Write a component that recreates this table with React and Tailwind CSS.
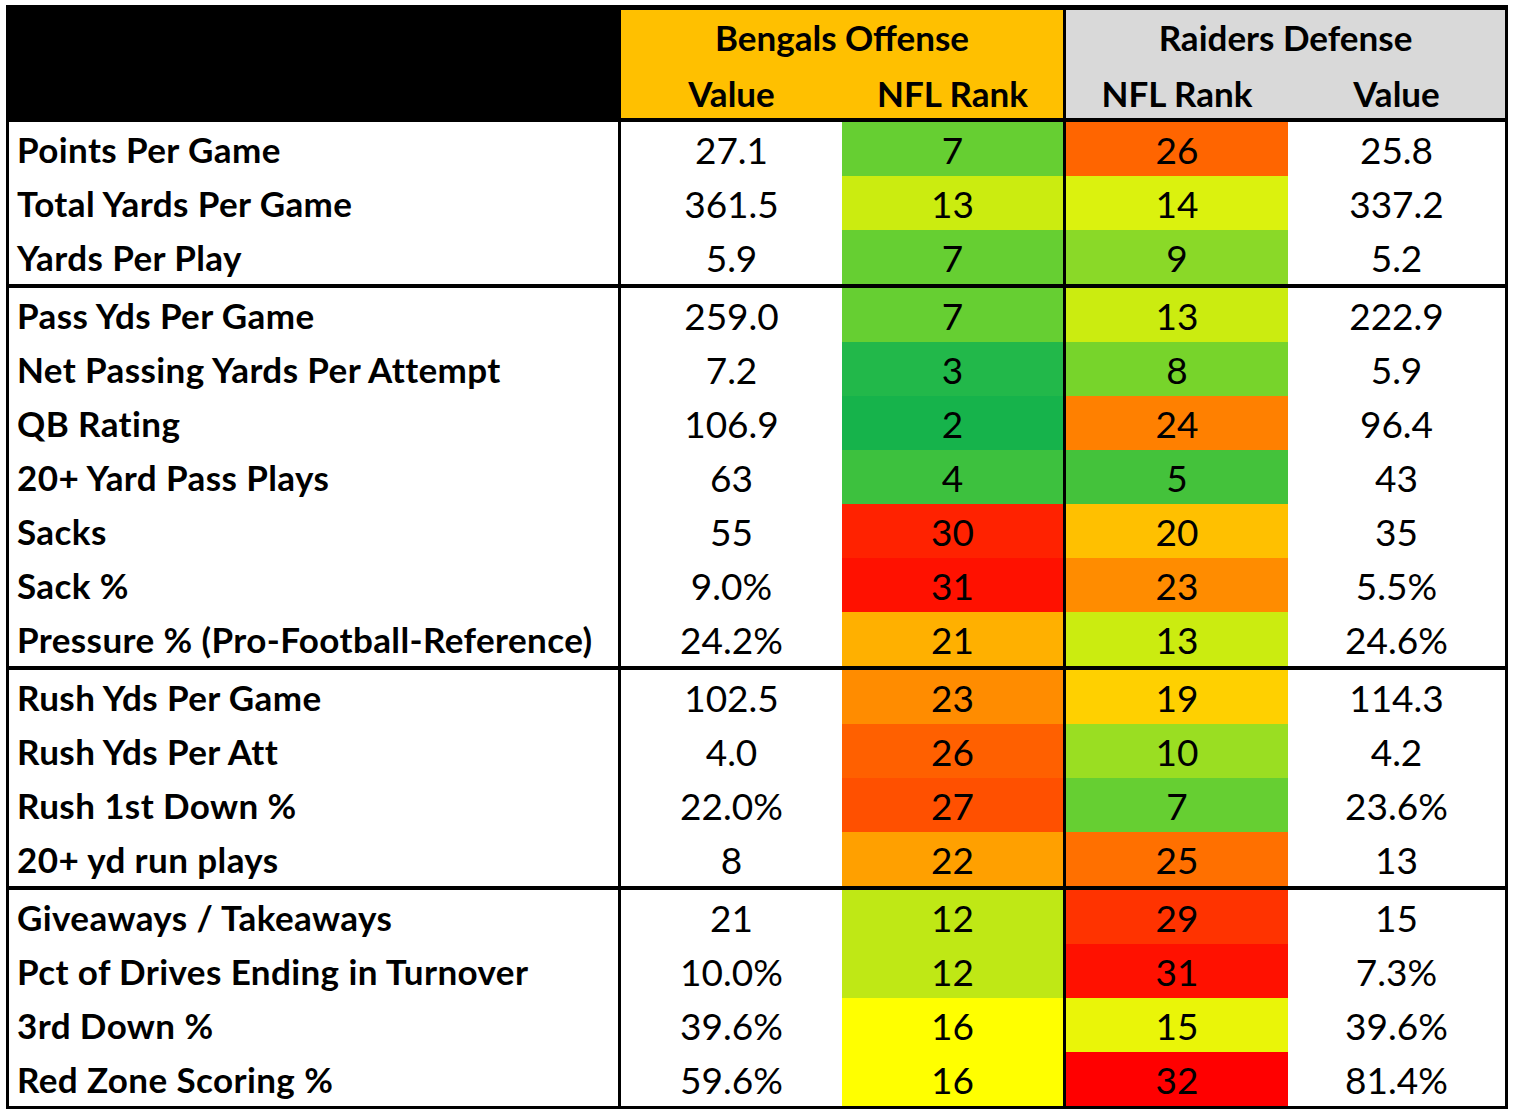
import React from "react";

const sections = [
    [
        ["Points Per Game", "27.1", 7, "#66cf32", 26, "#ff6500", "25.8"],
        ["Total Yards Per Game", "361.5", 13, "#cbec10", 14, "#dbf20e", "337.2"],
        ["Yards Per Play", "5.9", 7, "#66cf32", 9, "#8ad928", "5.2"],
    ],
    [
        ["Pass Yds Per Game", "259.0", 7, "#66cf32", 13, "#cbec10", "222.9"],
        ["Net Passing Yards Per Attempt", "7.2", 3, "#22b84a", 8, "#77d42b", "5.9"],
        ["QB Rating", "106.9", 2, "#16b34b", 24, "#ff8000", "96.4"],
        ["20+ Yard Pass Plays", "63", 4, "#3dc13e", 5, "#44c23b", "43"],
        ["Sacks", "55", 30, "#ff2200", 20, "#ffc000", "35"],
        ["Sack %", "9.0%", 31, "#ff1100", 23, "#ff8c00", "5.5%"],
        ["Pressure % (Pro-Football-Reference)", "24.2%", 21, "#ffb000", 13, "#cbec10", "24.6%"],
    ],
    [
        ["Rush Yds Per Game", "102.5", 23, "#ff8c00", 19, "#ffd000", "114.3"],
        ["Rush Yds Per Att", "4.0", 26, "#ff6000", 10, "#9ade22", "4.2"],
        ["Rush 1st Down %", "22.0%", 27, "#ff5000", 7, "#66cf32", "23.6%"],
        ["20+ yd run plays", "8", 22, "#ffa000", 25, "#ff7000", "13"],
    ],
    [
        ["Giveaways / Takeaways", "21", 12, "#bfe815", 29, "#ff3300", "15"],
        ["Pct of Drives Ending in Turnover", "10.0%", 12, "#bfe815", 31, "#ff1100", "7.3%"],
        ["3rd Down %", "39.6%", 16, "#ffff00", 15, "#eaf508", "39.6%"],
        ["Red Zone Scoring %", "59.6%", 16, "#ffff00", 32, "#ff0000", "81.4%"],
    ],
];

function StatRow({ row }) {
    const [label, oVal, oRank, oColor, dRank, dColor, dVal] = row;
    return (
        <div className="flex h-[54px] items-center text-[37px] leading-none">
            <div className="w-[612px] h-full flex items-center pl-[8px] text-[35px] font-bold tracking-[0.4px] border-r-[3px] border-black">
                {label}
            </div>
            <div className="w-[221px] h-full flex items-center justify-center">{oVal}</div>
            <div className="w-[224px] h-full border-r-[3px] border-black">
                <div className="h-full flex items-center justify-center" style={{ backgroundColor: oColor }}>
                    {oRank}
                </div>
            </div>
            <div className="w-[222px] h-full flex items-center justify-center" style={{ backgroundColor: dColor }}>
                {dRank}
            </div>
            <div className="w-[217px] h-full flex items-center justify-center">{dVal}</div>
        </div>
    );
}

export default function App() {
    return (
        <div className="bg-white w-[1516px] h-[1116px] pt-[5px] pl-[6px]" style={{ fontFamily: "Lato, 'Open Sans', sans-serif" }}>
            <div className="w-[1502px] border-[3px] border-black text-black">
                {/* header */}
                <div className="flex bg-black pt-[2px] pb-[4px] font-bold text-[35px] leading-none">
                    <div className="w-[612px]"></div>
                    <div className="w-[442px] bg-[#ffc000] flex flex-col">
                        <div className="h-[54px] flex items-center justify-center">Bengals Offense</div>
                        <div className="h-[54px] flex items-center pt-[4px]">
                            <div className="w-[221px] text-center">Value</div>
                            <div className="w-[221px] text-center">NFL Rank</div>
                        </div>
                    </div>
                    <div className="w-[3px]"></div>
                    <div className="w-[439px] bg-[#d9d9d9] flex flex-col">
                        <div className="h-[54px] flex items-center justify-center">Raiders Defense</div>
                        <div className="h-[54px] flex items-center pt-[4px]">
                            <div className="w-[222px] text-center">NFL Rank</div>
                            <div className="w-[217px] text-center">Value</div>
                        </div>
                    </div>
                </div>
                {sections.map((rows, i) => (
                    <div key={i} className={i < sections.length - 1 ? "border-b-[4px] border-black" : ""}>
                        {rows.map((row) => (
                            <StatRow key={row[0]} row={row} />
                        ))}
                    </div>
                ))}
            </div>
        </div>
    );
}
